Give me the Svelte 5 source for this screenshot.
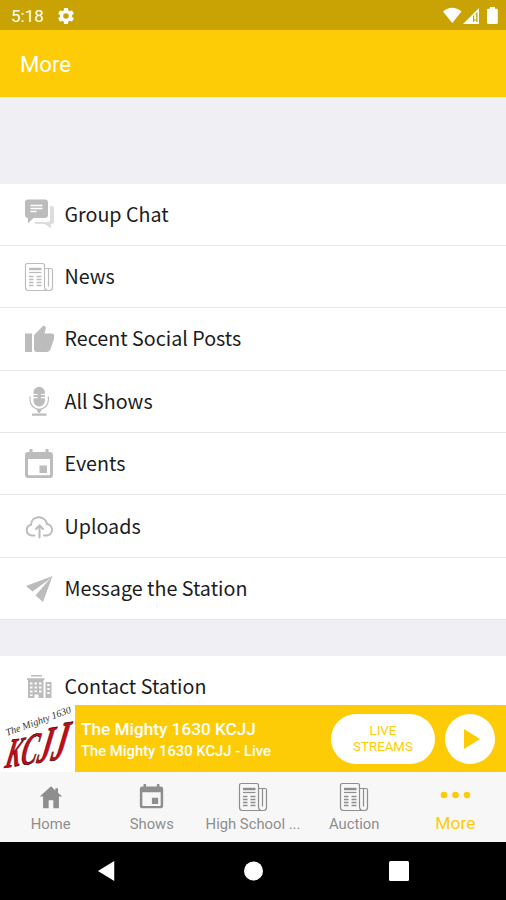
<script>
  const sections = [
    [
      { icon: 'chat', label: 'Group Chat' },
      { icon: 'news', label: 'News' },
      { icon: 'like', label: 'Recent Social Posts' },
      { icon: 'mic', label: 'All Shows' },
      { icon: 'calendar', label: 'Events' },
      { icon: 'upload', label: 'Uploads' },
      { icon: 'send', label: 'Message the Station' }
    ],
    [{ icon: 'building', label: 'Contact Station' }]
  ]

  const tabs = [
    { icon: 'home', label: 'Home' },
    { icon: 'calendar', label: 'Shows' },
    { icon: 'news', label: 'High School ...' },
    { icon: 'news', label: 'Auction' },
    { icon: 'dots', label: 'More' }
  ]

  let active = $state('More')
</script>

{#snippet glyph(name)}
  <svg class="glyph {name}" viewBox="0 0 30 30" fill="currentColor">
    {#if name === 'chat'}
      <path opacity=".5" d="M26 7h1.500q2.500 0 2.500 2.500v13q0 2.500-2.500 2.500H27v4.500L21 25H12.500q-2 0-2.500-2h13.500q2.500 0 2.500-2.500z" />
      <path d="M4 .5h17q3 0 3 3v12.500q0 3-3 3H9.500l-5.500 5.500V19q-3 0-3-3V3.500q0-3 3-3z" />
      <path d="M6.500 6.500h12M6.500 9.500h12M6.500 12.500h6" stroke="#fff" stroke-width="1.400" />
    {:else if name === 'news'}
      <g fill="none" stroke="currentColor" stroke-width="1.200">
        <path d="M20.500 24.500V3.500q0-2-2-2H3.500q-2 0-2 2v22q0 3 3 3h21q3 0 3-3V8q0-1.500-1.500-1.500h-6.500M20.500 24.500q0 3.500 3 4M24.500 6.500v18" />
        <path d="M5 7h12.500" stroke-width="2.400" />
        <path d="M5 10.500h12.500" />
        <path d="M5 14.500h4.500M12.500 14.500h5M5 17.500h4.500M12.500 17.500h5M5 20.500h4.500M12.500 20.500h5M5 23.500h4.500M12.500 23.500h5" stroke-width="1.600" />
      </g>
    {:else if name === 'like'}
      <path d="M1 9.500h7v18.500H1zM10 11l9-9q1.500-.8 2.500.8.500.8.200 2L20.500 9.500h7q3 0 3 3 0 1-.5 2.500L26.500 25q-1 3-4 3H13q-3 0-3-3z" />
    {:else if name === 'mic'}
      <path d="M9.500 6.500a5.700 5.700 0 0 1 11.400 0v8.200a5.700 5.700 0 0 1-11.400 0z" />
      <path d="M9 8.500h4.500M9 11.700h4.500M17 8.500h4.500M17 11.700h4.500" stroke="#fff" stroke-width="1.200" />
      <path d="M6.800 11h-.8v3a9.200 9.200 0 0 0 18.400 0v-3h-.8" fill="none" stroke="currentColor" stroke-width="1.100" />
      <path d="M12.300 23h5.800l-2.200 4h-1.400zM8 27.500h14.500v2.300H8z" />
    {:else if name === 'calendar'}
      <path fill-rule="evenodd" d="M5.500 0h3v3h13V0h3v3H26q3 0 3 3v20q0 3-3 3H4q-3 0-3-3V6q0-3 3-3h1.500zM4 10v15.500q0 .8.800.8h20.400q.8 0 .8-.8V10zM15.500 16.500H23V24h-7.500z" />
    {:else if name === 'upload'}
      <g fill="none" stroke="currentColor" stroke-width="2" stroke-linecap="round">
        <path d="M10.500 24.500H7.500A5.500 5.500 0 0 1 7 13.700C7.500 4 21 3.500 23 13a5.800 5.800 0 0 1 0 11.500H20" />
        <path d="M15.500 26.500V16M12 18l3.500-3.500L19 18" />
      </g>
    {:else if name === 'send'}
      <path d="M28.500 2L2 12l6.500 5.500L23 7zM28.500 2L19 28l-7.500-6.500L24 7z" />
    {:else if name === 'building'}
      <path fill-rule="evenodd" d="M7 3h11v1.500H7zM3 6.300h17.500v1.800H19.500V26h-5v-3.500h-4V26H4V8.100H3zM6 10.500v2h2.500v-2zM10.500 10.500v2H13v-2zM15 10.500v2h2.500v-2zM6 14.500v2h2.500v-2zM10.500 14.500v2H13v-2zM15 14.500v2h2.500v-2zM6 18.500v2h2.500v-2zM10.500 18.500v1.500H13v-1.500zM15 18.500v2h2.500v-2zM6 22.500v1.500h2.500v-1.500z" />
      <path fill-rule="evenodd" d="M21.500 10h6v16h-6zM23.300 12v2h2.400v-2zM23.300 16v2h2.400v-2zM23.300 20v2h2.400v-2z" />
    {:else if name === 'home'}
      <path d="M15 3.500L3 14.500h3.500V27h6v-8.500h5V27h6V14.500H27L22.500 10.500V5.500h-2.800V8z" />
    {:else if name === 'dots'}
      <circle cx="4" cy="13" r="3.300" /><circle cx="15.500" cy="13" r="3.300" /><circle cx="27" cy="13" r="3.300" />
    {/if}
  </svg>
{/snippet}

<div class="screen">
  <div class="status">
    <span class="time">5:18</span>
    <svg class="gear" viewBox="2 2 20 20">
      <path fill="#fff" fill-rule="evenodd" d="M19.430 12.980a8 8 0 0 0 0-1.960l2.110-1.650a.5.500 0 0 0 .120-.640l-2-3.460a.5.500 0 0 0-.610-.220l-2.490 1a7.300 7.300 0 0 0-1.690-.980L14.490 2.420A.5.500 0 0 0 14 2h-4a.5.500 0 0 0-.490.420l-.380 2.650c-.610.250-1.170.590-1.690.980l-2.490-1a.5.500 0 0 0-.610.220l-2 3.460a.5.500 0 0 0 .120.640l2.110 1.650a8 8 0 0 0 0 1.960l-2.110 1.650a.5.500 0 0 0-.120.640l2 3.460c.120.220.390.300.610.220l2.490-1c.520.400 1.080.730 1.690.980l.380 2.650c.030.240.240.420.490.420h4c.250 0 .460-.180.490-.420l.380-2.650a7.300 7.300 0 0 0 1.690-.980l2.490 1c.230.090.490 0 .610-.220l2-3.460a.5.500 0 0 0-.120-.640zM12 15.500a3.500 3.500 0 1 1 0-7 3.500 3.500 0 0 1 0 7z" />
    </svg>
    <svg class="signals" viewBox="0 0 56 18" fill="#fff">
      <path d="M0 4.500Q9-3 18.500 4.500L9.300 16z" />
      <path fill-rule="evenodd" d="M36 1v16H20zM30 9v6h4.500V5z" />
      <path d="M31.200 7.500h2v5h-2zM31.200 13.500h2v2h-2z" />
      <path d="M44 3q0-1.300 1.300-1.300H47V0h5v1.700h1.500q1.300 0 1.300 1.300v12.500q0 1.500-1.500 1.500h-8q-1.300 0-1.300-1.500z" />
    </svg>
  </div>

  <header>More</header>

  <main>
    {#each sections as items}
      <ul>
        {#each items as item}
          <li>
            {@render glyph(item.icon)}
            <span>{item.label}</span>
          </li>
        {/each}
      </ul>
    {/each}
  </main>

  <div class="player">
    <svg class="logo" viewBox="0 0 75 67">
      <rect width="75" height="67" fill="#fff" />
      <text class="tagline" transform="translate(7 31) rotate(-20)" textLength="69" lengthAdjust="spacingAndGlyphs">The Mighty 1630</text>
      <text class="callsign" transform="translate(4 63) skewY(-9) skewX(-12) scale(.56 1)"><tspan font-size="41">K</tspan><tspan font-size="44">C</tspan><tspan font-size="50">J</tspan><tspan font-size="54">J</tspan></text>
    </svg>
    <div class="track">
      <div class="title">The Mighty 1630 KCJJ</div>
      <div class="subtitle">The Mighty 1630 KCJJ - Live</div>
    </div>
    <button class="streams">LIVE<br />STREAMS</button>
    <button class="play" aria-label="Play">
      <svg viewBox="0 0 16 20"><path fill="#fecc06" d="M0 0l16 10L0 20z" /></svg>
    </button>
  </div>

  <nav>
    {#each tabs as tab}
      <button class="tab" class:active={tab.label === active} onclick={() => (active = tab.label)}>
        {@render glyph(tab.icon)}
        <span>{tab.label}</span>
      </button>
    {/each}
  </nav>

  <div class="system">
    <svg viewBox="0 0 18 22"><path fill="#fff" d="M17 0v22L-1 11z" /></svg>
    <svg viewBox="0 0 20 20"><circle cx="10.500" cy="10" r="9.500" fill="#fff" /></svg>
    <svg viewBox="0 0 20 20"><rect width="20" height="20" rx="1.500" fill="#fff" /></svg>
  </div>
</div>

<style>
  :global(body) {
    margin: 0;
  }
  .screen {
    display: flex;
    flex-direction: column;
    width: 506px;
    height: 900px;
    overflow: hidden;
    font-family: Roboto, sans-serif;
    background: #efeff4;
  }
  button {
    border: 0;
    padding: 0;
    font-family: inherit;
  }
  .status {
    display: flex;
    align-items: center;
    box-sizing: border-box;
    height: 30px;
    padding: 1px 7px 0 11px;
    background: #c9a303;
    color: #fff;
  }
  .time {
    width: 47px;
    font-size: 17px;
  }
  .gear {
    width: 16px;
    height: 16px;
  }
  .signals {
    width: 56px;
    height: 18px;
    margin-left: auto;
  }
  header {
    box-sizing: border-box;
    height: 67px;
    padding-left: 20px;
    background: #fecc06;
    color: #fff;
    font-size: 22.200px;
    line-height: 69px;
  }
  main {
    flex: 1;
    min-height: 0;
    padding-top: 86.500px;
    overflow: hidden;
  }
  ul {
    margin: 0 0 36px;
    padding: 0;
    list-style: none;
    background: #fff;
  }
  li {
    display: flex;
    align-items: center;
    box-sizing: border-box;
    height: 62.400px;
    padding-left: 24px;
    border-bottom: 1.500px solid #e6e6e8;
    color: #1c1c1c;
    font: 19.700px/30px "Noto Sans CJK SC", sans-serif;
  }
  li span {
    padding-bottom: 1px;
  }
  li .glyph {
    width: 30px;
    height: 30px;
    margin-right: 10.500px;
    color: #bcbcbc;
  }
  .player {
    display: flex;
    align-items: center;
    height: 67px;
    background: #fecc06;
    color: #fff;
  }
  .logo {
    width: 75px;
    height: 67px;
    overflow: visible;
  }
  .tagline {
    fill: #333;
    font: italic 10px "Liberation Serif", serif;
  }
  .callsign {
    fill: #c00d18;
    stroke: #300;
    stroke-width: 0.6;
    font-family: "Liberation Serif", serif;
    font-style: italic;
    font-weight: bold;
  }
  .track {
    flex: 1;
    padding: 2px 0 0 6px;
    font-weight: 500;
    white-space: nowrap;
  }
  .title {
    font-size: 17.200px;
    line-height: 23px;
  }
  .subtitle {
    font-size: 14.800px;
    line-height: 20px;
  }
  .streams {
    width: 104px;
    height: 50px;
    border-radius: 25px;
    background: #fff;
    color: #fecc06;
    font-size: 13.300px;
    line-height: 16px;
  }
  .play {
    display: flex;
    align-items: center;
    justify-content: center;
    width: 50px;
    height: 50px;
    margin: 0 11px 0 10px;
    border-radius: 50%;
    background: #fff;
  }
  .play svg {
    width: 16px;
    height: 20px;
    margin-left: 4px;
  }
  nav {
    display: grid;
    grid-template-columns: repeat(5, 1fr);
    height: 70px;
    background: #f7f7f7;
  }
  .tab {
    display: flex;
    flex-direction: column;
    align-items: center;
    min-width: 0;
    padding-top: 10px;
    background: none;
    color: #8e8e8e;
    font-size: 14.800px;
    line-height: 21px;
    white-space: nowrap;
  }
  .tab .glyph {
    width: 30px;
    height: 30px;
    margin-bottom: 2px;
  }
  .tab .calendar {
    width: 25px;
    height: 25px;
    margin: 2px 0 5px;
  }
  .tab .home {
    width: 28px;
    height: 28px;
    margin: 1px 0 3px;
  }
  .active {
    color: #fecc06;
    font-size: 17.400px;
    line-height: 19px;
  }
  .system {
    display: grid;
    grid-template-columns: repeat(3, 146px);
    justify-content: center;
    place-items: center;
    height: 58px;
    background: #000;
  }
  .system svg {
    width: 20px;
    height: 20px;
    overflow: visible;
  }
</style>
